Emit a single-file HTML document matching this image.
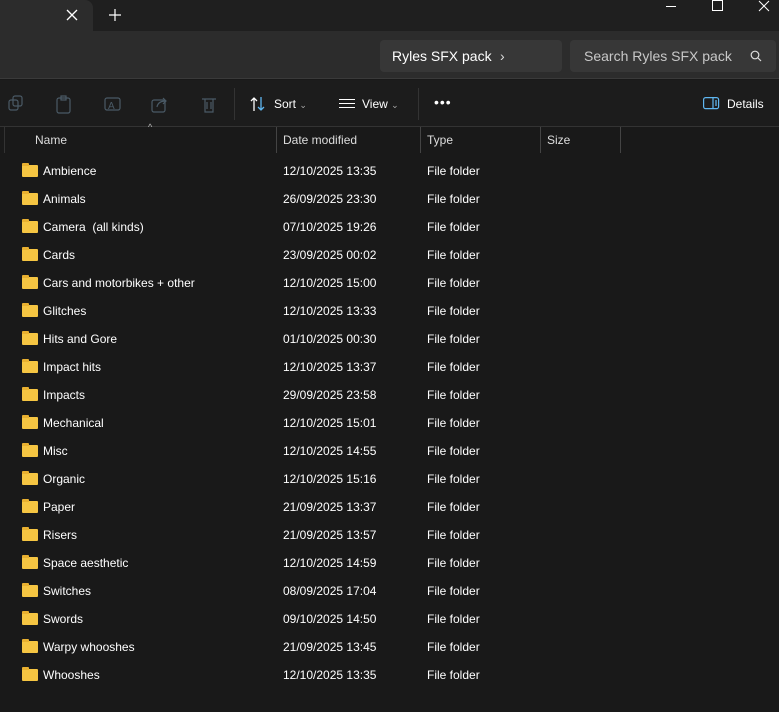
<!DOCTYPE html>
<html><head><meta charset="utf-8"><style>
*{margin:0;padding:0;box-sizing:border-box}
body{width:779px;height:712px;background:#191919;font-family:"Segoe UI","Liberation Sans",sans-serif;color:#fff;font-size:12px;position:relative;overflow:hidden}
.abs{position:absolute}
.title{left:0;top:0;width:779px;height:31px;background:#1f1f1f}
.tab{left:0;top:0;width:93px;height:31px;background:#2c2c2c;border-top-right-radius:8px}
.addr{left:0;top:31px;width:779px;height:48px;background:#2c2c2c;border-bottom:1px solid #3a3a3a}
.box{background:#373737;border-radius:4px;height:32px;top:40px;font-size:14px;line-height:32px;color:#fff}
.tb{left:0;top:80px;width:779px;height:47px;background:#1c1c1c;border-bottom:1px solid #333}
.hdr{top:127px;height:26px;font-size:12px;color:#ddd;line-height:26px}
.sep{top:127px;width:1px;height:26px;background:#444}
.row{left:0;height:28px;width:779px;font-size:12px;line-height:28px;color:#fff}
.row span{position:absolute}
.fold{position:absolute;left:22px;top:8px;width:16px;height:12px;background:#f5c542;border-radius:1px}
.fold:before{content:"";position:absolute;left:0;top:-2px;width:7px;height:3px;background:#e8b030;border-radius:1px 1px 0 0}
</style></head><body>
<div class="abs title"></div>
<div class="abs tab"></div>
<svg class="abs" style="left:66px;top:9px" width="12" height="12"><path d="M1 1L11 11M11 1L1 11" stroke="#fff" stroke-width="1.3"/></svg>
<svg class="abs" style="left:109px;top:9px" width="12" height="12"><path d="M6 0V12M0 6H12" stroke="#fff" stroke-width="1.2"/></svg>
<svg class="abs" style="left:666px;top:0px" width="110" height="14"><path d="M0 6.5H10" stroke="#fff"/><rect x="46.5" y="0.5" width="10" height="10" fill="none" stroke="#fff"/><path d="M93 1L103 11M103 1L93 11" stroke="#fff"/></svg>
<div class="abs addr"></div>
<div class="abs box" style="left:380px;width:182px;padding-left:12px">Ryles SFX pack<span style="position:absolute;left:120px;color:#ddd">›</span></div>
<div class="abs box" style="left:570px;width:206px;padding-left:14px;color:#c8c8c8">Search Ryles SFX pack
<svg style="position:absolute;left:180px;top:10px" width="12" height="12"><circle cx="5" cy="5" r="3.8" fill="none" stroke="#ddd" stroke-width="1.2"/><path d="M8 8L11 11" stroke="#ddd" stroke-width="1.2"/></svg></div>
<div class="abs tb"></div>
<svg class="abs" style="left:8px;top:95px" width="210" height="20" fill="none" stroke="#4a5a66" stroke-width="1.2">
<rect x="1" y="5" width="9" height="10" rx="2"/><rect x="5" y="1" width="9" height="10" rx="2"/>
<rect x="49" y="3" width="13" height="15" rx="2"/><rect x="53" y="1" width="5" height="4"/>
<rect x="97" y="3" width="15" height="12" rx="2"/><text x="100" y="14" font-size="10" fill="#4a5a66" stroke="none">A</text>
<rect x="144" y="5" width="13" height="12" rx="2"/><path d="M149 12Q150 6 158 6M155 3L158 6L155 9"/>
<path d="M194 4H208M197 4V17H205V4M199 7V14M203 7V14"/></svg>
<div class="abs" style="left:234px;top:88px;width:1px;height:32px;background:#333"></div>
<svg class="abs" style="left:250px;top:96px" width="16" height="16" fill="none" stroke-width="1.3"><path d="M4 15V2M1 5L4 2L7 5" stroke="#fff"/><path d="M11 1V14M8 11L11 14L14 11" stroke="#5fb6f0"/></svg>
<div class="abs" style="left:274px;top:97px;font-size:12px">Sort <span style="color:#aaa;font-size:9px">⌄</span></div>
<svg class="abs" style="left:339px;top:98px" width="16" height="12" stroke="#fff"><path d="M0 1.5H16M0 5.5H16M0 9.5H16"/></svg>
<div class="abs" style="left:362px;top:97px;font-size:12px">View <span style="color:#aaa;font-size:9px">⌄</span></div>
<div class="abs" style="left:418px;top:88px;width:1px;height:32px;background:#333"></div>
<div class="abs" style="left:434px;top:94px;font-size:14px;letter-spacing:1px">•••</div>
<svg class="abs" style="left:703px;top:97px" width="17" height="13" fill="none" stroke="#5fb6f0" stroke-width="1.2"><rect x="0.6" y="0.6" width="15" height="11" rx="2"/><path d="M10 1V12M12 4H14M12 6H14M12 8H14"/></svg>
<div class="abs" style="left:727px;top:97px;font-size:12px">Details</div>
<div class="abs" style="left:4px;top:127px;width:1px;height:26px;background:#333"></div>
<div class="abs hdr" style="left:35px">Name</div>
<div class="abs" style="left:148px;top:122px;color:#bbb;font-size:9px">^</div>
<div class="abs sep" style="left:276px"></div>
<div class="abs hdr" style="left:283px">Date modified</div>
<div class="abs sep" style="left:420px"></div>
<div class="abs hdr" style="left:427px">Type</div>
<div class="abs sep" style="left:540px"></div>
<div class="abs hdr" style="left:547px">Size</div>
<div class="abs sep" style="left:620px"></div>
<div class="abs row" style="top:157px"><i class="fold"></i><span style="left:43px">Ambience</span><span style="left:283px">12/10/2025 13:35</span><span style="left:427px">File folder</span></div>
<div class="abs row" style="top:185px"><i class="fold"></i><span style="left:43px">Animals</span><span style="left:283px">26/09/2025 23:30</span><span style="left:427px">File folder</span></div>
<div class="abs row" style="top:213px"><i class="fold"></i><span style="left:43px">Camera&nbsp; (all kinds)</span><span style="left:283px">07/10/2025 19:26</span><span style="left:427px">File folder</span></div>
<div class="abs row" style="top:241px"><i class="fold"></i><span style="left:43px">Cards</span><span style="left:283px">23/09/2025 00:02</span><span style="left:427px">File folder</span></div>
<div class="abs row" style="top:269px"><i class="fold"></i><span style="left:43px">Cars and motorbikes + other</span><span style="left:283px">12/10/2025 15:00</span><span style="left:427px">File folder</span></div>
<div class="abs row" style="top:297px"><i class="fold"></i><span style="left:43px">Glitches</span><span style="left:283px">12/10/2025 13:33</span><span style="left:427px">File folder</span></div>
<div class="abs row" style="top:325px"><i class="fold"></i><span style="left:43px">Hits and Gore</span><span style="left:283px">01/10/2025 00:30</span><span style="left:427px">File folder</span></div>
<div class="abs row" style="top:353px"><i class="fold"></i><span style="left:43px">Impact hits</span><span style="left:283px">12/10/2025 13:37</span><span style="left:427px">File folder</span></div>
<div class="abs row" style="top:381px"><i class="fold"></i><span style="left:43px">Impacts</span><span style="left:283px">29/09/2025 23:58</span><span style="left:427px">File folder</span></div>
<div class="abs row" style="top:409px"><i class="fold"></i><span style="left:43px">Mechanical</span><span style="left:283px">12/10/2025 15:01</span><span style="left:427px">File folder</span></div>
<div class="abs row" style="top:437px"><i class="fold"></i><span style="left:43px">Misc</span><span style="left:283px">12/10/2025 14:55</span><span style="left:427px">File folder</span></div>
<div class="abs row" style="top:465px"><i class="fold"></i><span style="left:43px">Organic</span><span style="left:283px">12/10/2025 15:16</span><span style="left:427px">File folder</span></div>
<div class="abs row" style="top:493px"><i class="fold"></i><span style="left:43px">Paper</span><span style="left:283px">21/09/2025 13:37</span><span style="left:427px">File folder</span></div>
<div class="abs row" style="top:521px"><i class="fold"></i><span style="left:43px">Risers</span><span style="left:283px">21/09/2025 13:57</span><span style="left:427px">File folder</span></div>
<div class="abs row" style="top:549px"><i class="fold"></i><span style="left:43px">Space aesthetic</span><span style="left:283px">12/10/2025 14:59</span><span style="left:427px">File folder</span></div>
<div class="abs row" style="top:577px"><i class="fold"></i><span style="left:43px">Switches</span><span style="left:283px">08/09/2025 17:04</span><span style="left:427px">File folder</span></div>
<div class="abs row" style="top:605px"><i class="fold"></i><span style="left:43px">Swords</span><span style="left:283px">09/10/2025 14:50</span><span style="left:427px">File folder</span></div>
<div class="abs row" style="top:633px"><i class="fold"></i><span style="left:43px">Warpy whooshes</span><span style="left:283px">21/09/2025 13:45</span><span style="left:427px">File folder</span></div>
<div class="abs row" style="top:661px"><i class="fold"></i><span style="left:43px">Whooshes</span><span style="left:283px">12/10/2025 13:35</span><span style="left:427px">File folder</span></div>
</body></html>
